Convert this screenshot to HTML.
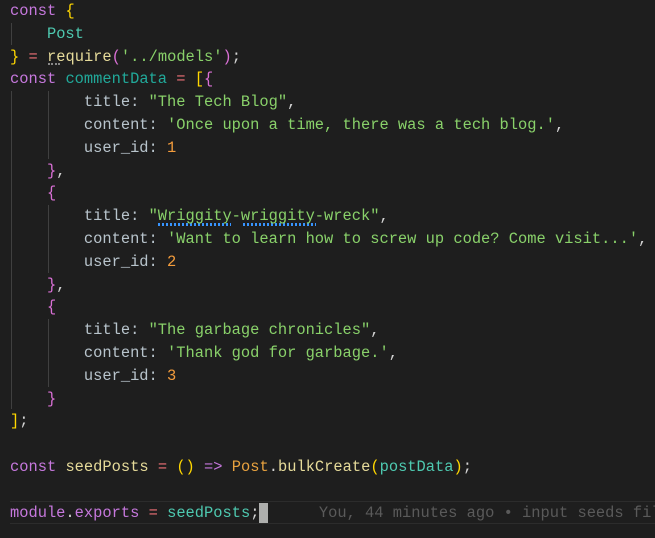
<!DOCTYPE html>
<html><head><style>
html,body{margin:0;padding:0;background:#1e1e1e;width:655px;height:538px;overflow:hidden}
.c{position:absolute;left:10px;top:0;font-family:"Liberation Mono",monospace;font-size:15.4px;line-height:22.8px;color:#d4d4d4}
.l{height:22.8px;white-space:pre}
.k{color:#c678dd}.v{color:#4ec9b0}.vd{color:#21a99a}.y{color:#ffd700}.p{color:#da70d6}.s{color:#89d16a}.pr{color:#b8c4cc}.n{color:#f39c3c}.o{color:#f07178}.f{color:#e6db9a}.cl{color:#e8a23f}.w{color:#d4d4d4}
.g{position:absolute;width:1px;background:#404040}
.sq{position:absolute;height:3px;background:repeating-linear-gradient(90deg,#3794ff 0 2px,transparent 2px 4px)}
</style></head><body>
<div class="g" style="left:11px;top:23px;height:22px"></div>
<div class="g" style="left:11px;top:91px;height:318px"></div>
<div class="g" style="left:48px;top:91px;height:68px"></div>
<div class="g" style="left:48px;top:205px;height:68px"></div>
<div class="g" style="left:48px;top:319px;height:68px"></div>
<div style="position:absolute;left:10px;top:501px;width:645px;height:23px;border-top:1px solid #2c2c2c;border-bottom:1px solid #2c2c2c;box-sizing:border-box"></div>
<div style="position:absolute;left:259px;top:503px;width:9px;height:20px;background:#aeafad"></div>
<div style="position:absolute;left:48px;top:63px;width:12px;height:2px;border-top:2px dotted #888"></div>
<div class="sq" style="left:158px;top:223px;width:73px"></div>
<div class="sq" style="left:243px;top:223px;width:73px"></div>
<div class="c"><div class="l"><span class="k">const</span> <span class="y">{</span></div><div class="l">    <span class="v">Post</span></div><div class="l"><span class="y">}</span> <span class="o">=</span> <span class="f">require</span><span class="p">(</span><span class="s">'../models'</span><span class="p">)</span>;</div><div class="l"><span class="k">const</span> <span class="vd">commentData</span> <span class="o">=</span> <span class="y">[</span><span class="p">{</span></div><div class="l">        <span class="pr">title:</span> <span class="s">"The Tech Blog"</span>,</div><div class="l">        <span class="pr">content:</span> <span class="s">'Once upon a time, there was a tech blog.'</span>,</div><div class="l">        <span class="pr">user_id:</span> <span class="n">1</span></div><div class="l">    <span class="p">}</span>,</div><div class="l">    <span class="p">{</span></div><div class="l">        <span class="pr">title:</span> <span class="s">"Wriggity-wriggity-wreck"</span>,</div><div class="l">        <span class="pr">content:</span> <span class="s">'Want to learn how to screw up code? Come visit...'</span>,</div><div class="l">        <span class="pr">user_id:</span> <span class="n">2</span></div><div class="l">    <span class="p">}</span>,</div><div class="l">    <span class="p">{</span></div><div class="l">        <span class="pr">title:</span> <span class="s">"The garbage chronicles"</span>,</div><div class="l">        <span class="pr">content:</span> <span class="s">'Thank god for garbage.'</span>,</div><div class="l">        <span class="pr">user_id:</span> <span class="n">3</span></div><div class="l">    <span class="p">}</span></div><div class="l"><span class="y">]</span>;</div><div class="l"> </div><div class="l"><span class="k">const</span> <span class="f">seedPosts</span> <span class="o">=</span> <span class="y">()</span> <span class="k">=&gt;</span> <span class="cl">Post</span>.<span class="f">bulkCreate</span><span class="y">(</span><span class="v">postData</span><span class="y">)</span>;</div><div class="l"> </div><div class="l"><span class="k">module</span>.<span class="k">exports</span> <span class="o">=</span> <span class="v">seedPosts</span>;      <span style="color:#5a5a5a;margin-left:4px">You, 44 minutes ago • input seeds file</span></div></div>
</body></html>
